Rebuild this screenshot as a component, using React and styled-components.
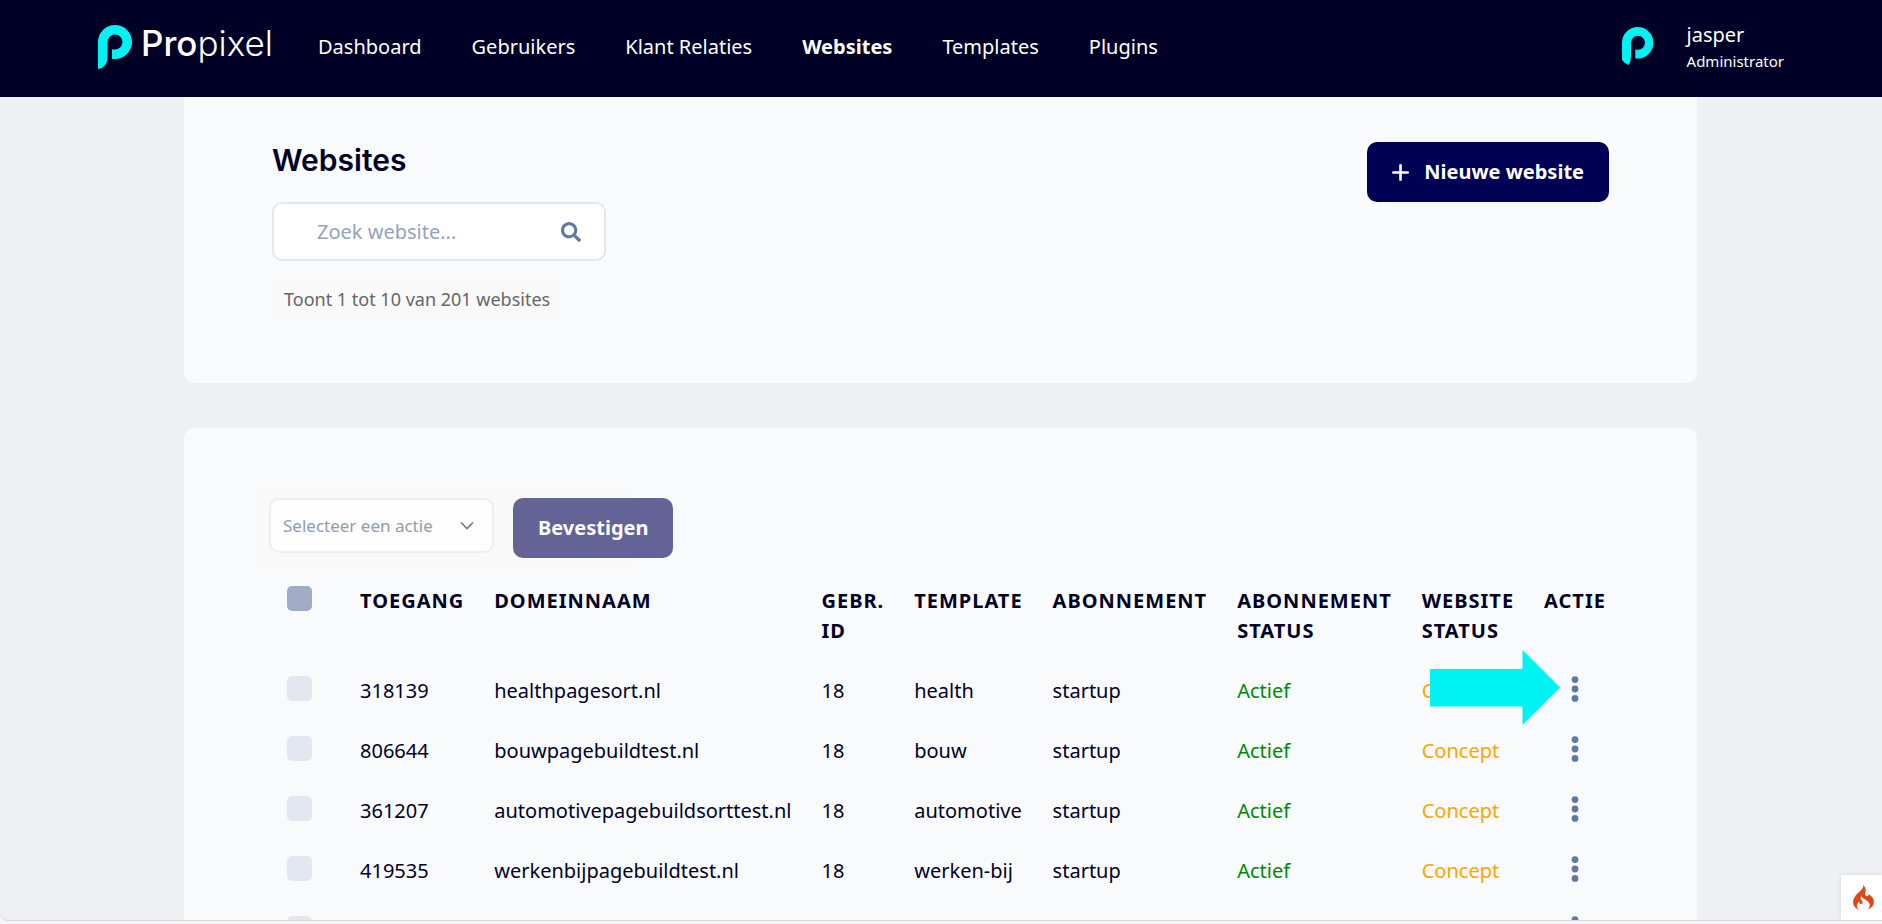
import React from "react";
import styled, { createGlobalStyle } from "styled-components";
import { FaSearch } from "react-icons/fa";
import { SiCodeigniter } from "react-icons/si";

const GlobalStyle = createGlobalStyle`
  * {
    box-sizing: border-box;
  }
  body {
    margin: 0;
    font-family: "Noto Sans", sans-serif;
    font-size: 20px;
    line-height: 30px;
    color: #000026;
    background-color: #f5f5f5;
  }
`;

const Page = styled.div`
  position: relative;
  display: flex;
  flex-direction: column;
  height: calc(100vh - 3px);
  overflow: hidden;
  background-color: #eff0f4;
  border-bottom: 1px solid #d6d6d6;
  border-radius: 0 0 0 8px;
`;

const Header = styled.header`
  display: flex;
  flex: none;
  align-items: center;
  height: 97px;
  padding: 0 98px;
  background-color: #000026;
  color: #fff;
`;

const Logo = styled.a`
  display: flex;
  align-items: flex-start;
  gap: 9px;
  width: 220px;
  padding-bottom: 3px;
  color: #fff;
  text-decoration: none;
`;

const LogoText = styled.span`
  font-family: Inter, sans-serif;
  font-size: 35px;
  font-weight: 500;
  line-height: 36px;

  span {
    font-weight: 300;
  }
`;

const Nav = styled.nav`
  display: flex;
  flex: 1;
  gap: 50px;
  padding-bottom: 3px;
`;

const NavLink = styled.a`
  color: #fff;
  font-weight: ${(props) => (props.$active ? 700 : 400)};
  text-decoration: none;
`;

const User = styled.div`
  display: flex;
  align-items: center;
  gap: 33px;
  padding-bottom: 3px;
`;

const UserName = styled.div`
  line-height: 28px;
`;

const UserRole = styled.div`
  font-size: 15px;
  line-height: 24px;
`;

const Main = styled.main`
  display: flex;
  flex: 1;
  flex-direction: column;
  gap: 45px;
  min-height: 0;
  padding: 0 185px 0 184px;
  overflow: hidden;
`;

const Card = styled.section`
  flex: none;
  background-color: #f9fafc;
  border-radius: ${(props) => (props.$first ? "0 0 10px 10px" : "10px")};
  padding: ${(props) => (props.$first ? "45px 88px 64px" : "59px 77px 64px 88px")};
`;

const CardTop = styled.div`
  display: flex;
  align-items: flex-start;
  justify-content: space-between;
`;

const Title = styled.h1`
  margin: 0 0 24px;
  font-family: Inter, sans-serif;
  font-size: 30px;
  font-weight: 600;
  line-height: 36px;
`;

const SearchBox = styled.label`
  display: flex;
  align-items: center;
  width: 334px;
  height: 59px;
  padding: 0 23px 0 43px;
  background-color: #fff;
  border: 2px solid #e2e7f0;
  border-radius: 10px;
  color: #6079a3;
`;

const SearchInput = styled.input`
  flex: 1;
  min-width: 0;
  padding: 0;
  border: 0;
  outline: none;
  background: transparent;
  font: inherit;
  color: #000026;

  &::placeholder {
    color: #94a3c0;
    opacity: 1;
  }
`;

const ResultInfo = styled.p`
  display: inline-block;
  margin: 19px 0 0;
  padding: 5px 12px;
  background-color: #f9f9fa;
  border-radius: 6px;
  color: #666;
  font-size: 18px;
  line-height: 29px;
`;

const Button = styled.button`
  display: flex;
  flex: none;
  align-items: center;
  gap: 15px;
  height: 60px;
  padding: 0 25px;
  border: 0;
  border-radius: 10px;
  background-color: #000055;
  color: #fff;
  font: inherit;
  font-weight: 700;
  opacity: ${(props) => (props.disabled ? 0.6 : 1)};
`;

const BulkActions = styled.div`
  display: flex;
  align-items: flex-start;
  gap: 19px;
  width: 374px;
  height: 84px;
  margin-left: -15px;
  padding: 11px 12px;
  background-color: #f9f9f9;
  border-radius: 12px;
`;

const SelectBox = styled.div`
  display: grid;
  flex: none;
  align-items: center;
  width: 225px;
  height: 55px;

  svg {
    grid-area: 1 / 1;
    justify-self: end;
    margin-right: 20px;
    pointer-events: none;
  }
`;

const Select = styled.select`
  grid-area: 1 / 1;
  width: 100%;
  height: 100%;
  padding: 0 12px;
  appearance: none;
  border: 2px solid #ebeff4;
  border-radius: 10px;
  background-color: #fdfdfd;
  color: #939cab;
  font-family: inherit;
  font-size: 17px;
`;

const Table = styled.table`
  border-collapse: collapse;
  white-space: nowrap;
`;

const Th = styled.th`
  padding: 15px;
  font-weight: 700;
  letter-spacing: 1px;
  text-align: left;
  text-transform: uppercase;
  vertical-align: top;
`;

const Td = styled.td`
  position: relative;
  height: 60px;
  padding: 15px;
  color: ${(props) => props.$color || "#000026"};
  vertical-align: top;
`;

const Checkbox = styled.input`
  display: block;
  width: 25px;
  height: 25px;
  margin: 0 18px 0 0;
  appearance: none;
  border-radius: 5px;
  background-color: ${(props) => (props.$all ? "#a0acc5" : "#e2e7f0")};
`;

const MenuButton = styled.button`
  display: flex;
  justify-content: center;
  width: 100%;
  height: 30px;
  padding: 0;
  border: 0;
  background: transparent;
  color: #6079a3;
`;

const Pointer = styled.svg`
  position: absolute;
  top: -11px;
  left: 23px;
  z-index: 1;
`;

const DebugBadge = styled.button`
  position: absolute;
  right: 0;
  bottom: 0;
  display: flex;
  align-items: center;
  width: 41px;
  height: 45px;
  padding: 0 0 0 10px;
  border: 0;
  background-color: #fff;
  box-shadow: 0 0 4px rgba(0, 0, 0, 0.12);
  color: #dd4814;
`;

const navItems = [
  "Dashboard",
  "Gebruikers",
  "Klant Relaties",
  "Websites",
  "Templates",
  "Plugins",
];

const websites = [
  { id: "318139", domain: "healthpagesort.nl", template: "health" },
  { id: "806644", domain: "bouwpagebuildtest.nl", template: "bouw" },
  { id: "361207", domain: "automotivepagebuildsorttest.nl", template: "automotive" },
  { id: "419535", domain: "werkenbijpagebuildtest.nl", template: "werken-bij" },
];

function LogoMark() {
  return (
    <svg width="34" height="44" viewBox="0 0 34 44" fill="#00f2f2" aria-hidden="true">
      <path d="M0 17A17 17 0 1 1 17 34H14V24.3Q15.500 24.600 17 24.500A7.500 7.500 0 1 0 9.500 17V32C9.500 39 5.500 43.500 0 44Z" />
    </svg>
  );
}

function Avatar() {
  return (
    <svg width="32" height="40" viewBox="0 0 32 40" fill="#00f2f2" aria-hidden="true">
      <path d="M0 16A15.700 15.700 0 1 1 16 31.500H13.300V22.500Q14.500 22.800 16 22.800A7 7 0 1 0 9 16V30Q9 35 6.500 38Q2.500 36.500 0 33Z" />
    </svg>
  );
}

function RowMenu({ label }) {
  return (
    <MenuButton type="button" aria-label={label}>
      <svg width="8" height="26" viewBox="0 0 8 26" fill="currentColor">
        <circle cx="4" cy="3.600" r="3.400" />
        <circle cx="4" cy="13" r="3.400" />
        <circle cx="4" cy="22.400" r="3.400" />
      </svg>
    </MenuButton>
  );
}

export default function App() {
  return (
    <>
      <GlobalStyle />
      <Page>
        <Header>
          <Logo href="#">
            <LogoMark />
            <LogoText>
              Pro<span>pixel</span>
            </LogoText>
          </Logo>
          <Nav>
            {navItems.map((item) => (
              <NavLink href="#" key={item} $active={item === "Websites"}>
                {item}
              </NavLink>
            ))}
          </Nav>
          <User>
            <Avatar />
            <div>
              <UserName>jasper</UserName>
              <UserRole>Administrator</UserRole>
            </div>
          </User>
        </Header>

        <Main>
          <Card $first>
            <CardTop>
              <div>
                <Title>Websites</Title>
                <SearchBox>
                  <SearchInput
                    type="text"
                    placeholder="Zoek website..."
                    aria-label="Zoek website"
                  />
                  <FaSearch size={20} />
                </SearchBox>
                <ResultInfo>Toont 1 tot 10 van 201 websites</ResultInfo>
              </div>
              <Button type="button">
                <svg width="17" height="17" viewBox="0 0 17 17" stroke="#fff" strokeWidth="2.600" strokeLinecap="round">
                  <path d="M8.500 1.300V15.700M1.300 8.500H15.700" />
                </svg>
                Nieuwe website
              </Button>
            </CardTop>
          </Card>

          <Card>
            <BulkActions>
              <SelectBox>
                <Select aria-label="Selecteer een actie">
                  <option>Selecteer een actie</option>
                </Select>
                <svg width="14" height="10" viewBox="0 0 14 10" fill="none" stroke="#777" strokeWidth="1.600">
                  <path d="M1 1.500L7 7.500L13 1.500" />
                </svg>
              </SelectBox>
              <Button type="button" disabled>
                Bevestigen
              </Button>
            </BulkActions>

            <Table>
              <thead>
                <tr>
                  <Th>
                    <Checkbox type="checkbox" aria-label="Alles selecteren" $all />
                  </Th>
                  <Th>Toegang</Th>
                  <Th>Domeinnaam</Th>
                  <Th>
                    Gebr.
                    <br />
                    ID
                  </Th>
                  <Th>Template</Th>
                  <Th>Abonnement</Th>
                  <Th>
                    Abonnement
                    <br />
                    status
                  </Th>
                  <Th>
                    Website
                    <br />
                    status
                  </Th>
                  <Th>Actie</Th>
                </tr>
              </thead>
              <tbody>
                {websites.map((site, index) => (
                  <tr key={site.id}>
                    <Td>
                      <Checkbox type="checkbox" aria-label={site.domain} />
                    </Td>
                    <Td>{site.id}</Td>
                    <Td>{site.domain}</Td>
                    <Td>18</Td>
                    <Td>{site.template}</Td>
                    <Td>startup</Td>
                    <Td $color="#008a00">Actief</Td>
                    <Td $color="#ffa500">
                      Concept
                      {index === 0 && (
                        <Pointer width="130" height="75" viewBox="0 0 130 75" fill="#00f2f2">
                          <path d="M0 19H92.500V0L130 37.500L92.500 75V56.500H0Z" />
                        </Pointer>
                      )}
                    </Td>
                    <Td>
                      <RowMenu label={`Acties ${site.domain}`} />
                    </Td>
                  </tr>
                ))}
                <tr>
                  <Td>
                    <Checkbox type="checkbox" aria-label="Website" />
                  </Td>
                  <Td colSpan={7} />
                  <Td>
                    <RowMenu label="Acties" />
                  </Td>
                </tr>
              </tbody>
            </Table>
          </Card>
        </Main>

        <DebugBadge type="button" aria-label="CodeIgniter">
          <SiCodeigniter size={25} />
        </DebugBadge>
      </Page>
    </>
  );
}
